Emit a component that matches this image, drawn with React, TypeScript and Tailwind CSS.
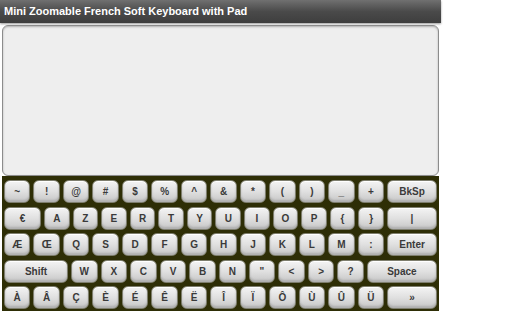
import React from 'react';

type K = { label: string; w?: string };

const rows: K[][] = [
  [
    ...'~ ! @ # $ % ^ & * ( ) _ +'.split(' ').map((l) => ({ label: l })),
    { label: 'BkSp', w: 'w-[50px]' },
  ],
  [
    { label: '€', w: 'w-[37px]' },
    ...'A Z E R T Y U I O P { }'.split(' ').map((l) => ({ label: l })),
    { label: '|', w: 'w-[50px]' },
  ],
  [
    ...'Æ Œ Q S D F G H J K L M :'.split(' ').map((l) => ({ label: l })),
    { label: 'Enter', w: 'w-[50px]' },
  ],
  [
    { label: 'Shift', w: 'w-[64px]' },
    ...'W X C V B N " < > ?'.split(' ').map((l) => ({ label: l })),
    { label: 'Space', w: 'w-[70px]' },
  ],
  [
    ...'À Â Ç È É Ê Ë Î Ï Ô Ù Û Ü'.split(' ').map((l) => ({ label: l })),
    { label: '»', w: 'w-[50px]' },
  ],
];

function Key({ k }: { k: K }) {
  return (
    <div
      className={`${k.w ? `${k.w} shrink-0` : 'flex-1 min-w-0'} h-full rounded-[6px] border border-[#7e7e6e] bg-gradient-to-b from-[#f4f4f4] via-[#e0e0e0] to-[#c6c6c6] shadow-[inset_0_1px_0_#ffffff,inset_0_-2px_2px_#b0b0b0] flex items-center justify-center text-[10px] font-bold text-[#3a3a3a] select-none`}
    >
      {k.label}
    </div>
  );
}

export default function App() {
  return (
    <div className="w-[512px] h-[320px] bg-white font-['Liberation_Sans',Arial,sans-serif] overflow-hidden">
      <div className="w-[441px]">
        <div className="h-[23px] bg-gradient-to-b from-[#707070] via-[#4a4a4a] to-[#3e3e3e] flex items-center pl-[4px] shadow-[0_1px_2px_#9a9a9a]">
          <span className="text-white text-[11px] font-bold">
            Mini Zoomable French Soft Keyboard with Pad
          </span>
        </div>
        <div className="pl-[2px] pr-[2px] pt-[2px]">
          <div className="h-[151px] rounded-[6px] border border-[#8c8c8c] bg-[#eeeeee] shadow-[inset_0_1px_2px_#b0b0b0]" />
          <div className="bg-[#2e2e06] pt-[4px] pb-[2px] px-[2px] flex flex-col gap-y-[3.5px] w-[437px]">
            {rows.map((r, i) => (
              <div key={i} className="h-[23px] flex gap-x-[3px]">
                {r.map((k, j) => (
                  <Key key={j} k={k} />
                ))}
              </div>
            ))}
          </div>
        </div>
      </div>
    </div>
  );
}
